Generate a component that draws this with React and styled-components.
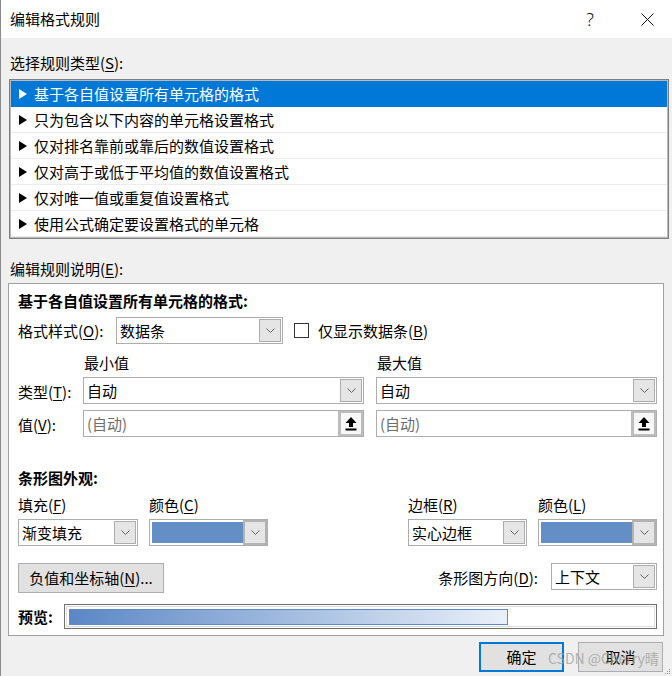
import React from 'react';
import styled, { createGlobalStyle } from 'styled-components';

const GlobalStyle = createGlobalStyle`
  html, body { margin: 0; padding: 0; background: #f0f0f0; }
  body {
    font-family: "Noto Sans CJK SC", "Noto Sans", sans-serif;
    font-size: 15px;
    color: #000;
  }
  * { box-sizing: border-box; }
  u { text-underline-offset: 2px; text-decoration-thickness: 1px; }
`;

const Window = styled.div`
  position: relative;
  width: 672px;
  height: 676px;
  background: #f0f0f0;
  border-left: 1px solid #8a8a8a;
  display: flex;
  flex-direction: column;
  overflow: hidden;
`;

const TitleBar = styled.div`
  height: 38px;
  flex: none;
  background: #fff;
  display: flex;
  align-items: center;
  padding-left: 9px;
  padding-right: 13px;
`;

const TitleText = styled.div`
  flex: 1;
  line-height: 22px;
`;

const CaptionButton = styled.div`
  width: 24px;
  height: 24px;
  display: flex;
  align-items: center;
  justify-content: center;
  font-family: "Noto Sans", sans-serif;
  font-size: 18px;
  font-weight: 300;
  color: #111;
  margin-left: ${(p) => p.$ml || 0}px;
`;

const Body = styled.div`
  flex: 1;
  display: flex;
  flex-direction: column;
  padding-left: 7px;
`;

const SectionLabel = styled.div`
  line-height: 22px;
  padding-left: 2px;
  margin-top: ${(p) => p.$mt}px;
`;

const ListBox = styled.div`
  margin-top: 5px;
  margin-left: 1px;
  width: 660px;
  border: 1px solid #7f7f7f;
  box-shadow: inset 0 0 0 1px #b9b9b9;
  padding: 1px;
  background: #fff;
`;

const ListRow = styled.div`
  height: 26px;
  display: flex;
  align-items: center;
  gap: 7px;
  padding-left: 8px;
  border-bottom: 1px solid ${(p) => (p.$selected ? '#0078d7' : '#ececec')};
  background: ${(p) => (p.$selected ? '#0078d7' : '#fff')};
  color: ${(p) => (p.$selected ? '#fff' : '#000')};
  line-height: 22px;
`;

const Triangle = styled.span`
  width: 0;
  height: 0;
  border-top: 5px solid transparent;
  border-bottom: 5px solid transparent;
  border-left: 8px solid ${(p) => (p.$light ? '#fff' : '#000')};
`;

const Panel = styled.div`
  margin-top: 3px;
  width: 656px;
  background: #fff;
  border: 1px solid #a0a0a0;
  padding: 6px 6px 6px 9px;
  display: flex;
  flex-direction: column;
`;

const Heading = styled.div`
  font-weight: 700;
  line-height: 22px;
  white-space: nowrap;
  flex: none;
  width: ${(p) => (p.$w ? `${p.$w}px` : 'auto')};
  margin-top: ${(p) => p.$mt || 0}px;
`;

const Row = styled.div`
  display: flex;
  align-items: ${(p) => p.$align || 'center'};
  margin-top: ${(p) => p.$mt || 0}px;
  gap: ${(p) => p.$gap || 0}px;
`;

const Label = styled.div`
  line-height: 22px;
  white-space: nowrap;
  width: ${(p) => (p.$w ? `${p.$w}px` : 'auto')};
  flex: none;
  padding-top: ${(p) => p.$pt || 0}px;
  margin-left: ${(p) => p.$ml || 0}px;
`;

const SelectBox = styled.div`
  width: ${(p) => p.$w}px;
  height: 27px;
  flex: none;
  border: 1px solid #adadad;
  background: #fff;
  display: flex;
  align-items: stretch;
  margin-left: ${(p) => p.$ml || 0}px;
`;

const SelectValue = styled.div`
  flex: 1;
  padding-left: 3px;
  display: flex;
  align-items: center;
  line-height: 22px;
  color: ${(p) => (p.$muted ? '#6d6d6d' : '#000')};
`;

const DropButton = styled.div`
  width: 22px;
  margin: 1px 1px 1px 0;
  border: 1px solid #adadad;
  background: #e5e5e5;
  display: flex;
  align-items: center;
  justify-content: center;
`;

const StrongDrop = styled.div`
  width: 24px;
  border: 2px solid #b3b3b3;
  background: #e5e5e5;
  display: flex;
  align-items: center;
  justify-content: center;
`;

const Swatch = styled.div`
  flex: 1;
  background: #638ec6;
  margin: 2px 0 2px 2px;
`;

const PickButton = styled.div`
  width: 25px;
  border: 2px solid #bdbdbd;
  border-left-width: 3px;
  background: #f7f7f7;
  display: flex;
  align-items: center;
  justify-content: center;
`;

const CheckBox = styled.div`
  width: 15px;
  height: 15px;
  flex: none;
  border: 1px solid #333;
  background: #fff;
  margin-left: 11px;
  margin-right: 9px;
`;

const Column = styled.div`
  display: flex;
  flex-direction: column;
  gap: 3px;
`;

const Spacer = styled.div`
  flex: 1;
`;

const PushButton = styled.div`
  width: ${(p) => p.$w}px;
  height: 30px;
  flex: none;
  display: flex;
  align-items: center;
  justify-content: center;
  background: #e1e1e1;
  border: ${(p) => (p.$default ? '2px solid #0078d7' : '1px solid #adadad')};
  line-height: 22px;
  white-space: nowrap;
  margin-left: ${(p) => p.$ml || 0}px;
`;

const PreviewBox = styled.div`
  width: 593px;
  height: 25px;
  flex: none;
  border: 1px solid #707070;
  padding: 1px;
  background: #fff;
`;

const PreviewInner = styled.div`
  height: 100%;
  border: 1px solid #dcdcdc;
  padding: 2px;
`;

const Bar = styled.div`
  height: 16px;
  border: 1px solid #5f88c4;
  background: linear-gradient(to right, #5b87c5, #eaf0f9);
`;

const Footer = styled.div`
  display: flex;
  justify-content: flex-end;
  margin-top: 6px;
  padding-right: 9px;
`;

const Watermark = styled.div`
  position: absolute;
  left: 547px;
  top: 648px;
  line-height: 20px;
  font-size: 14px;
  color: rgba(160, 160, 160, 0.8);
  pointer-events: none;
  white-space: nowrap;
`;

const Grip = styled.svg`
  position: absolute;
  right: 1px;
  bottom: 1px;
`;

const Chevron = () => (
  <svg width="9" height="5" viewBox="0 0 9 5">
    <path d="M0.5 0.5 L4.5 4.5 L8.5 0.5" stroke="#606060" strokeWidth="1" fill="none" />
  </svg>
);

const UploadIcon = () => (
  <svg width="12" height="15" viewBox="0 0 12 15">
    <path d="M6 1 L11.5 7 H8 V11 H4 V7 H0.5 Z" fill="#000" />
    <rect x="0.5" y="12.5" width="11" height="2" fill="#000" />
  </svg>
);

const CloseIcon = () => (
  <svg width="13" height="13" viewBox="0 0 13 13">
    <path d="M0.5 0.5 L12.5 12.5 M12.5 0.5 L0.5 12.5" stroke="#111" strokeWidth="1" />
  </svg>
);

const rules = [
  '基于各自值设置所有单元格的格式',
  '只为包含以下内容的单元格设置格式',
  '仅对排名靠前或靠后的数值设置格式',
  '仅对高于或低于平均值的数值设置格式',
  '仅对唯一值或重复值设置格式',
  '使用公式确定要设置格式的单元格',
];

const Select = ({ w, value, muted, ml }) => (
  <SelectBox $w={w} $ml={ml}>
    <SelectValue $muted={muted}>{value}</SelectValue>
    <DropButton>
      <Chevron />
    </DropButton>
  </SelectBox>
);

const ColorSelect = ({ w }) => (
  <SelectBox $w={w}>
    <Swatch />
    <StrongDrop>
      <Chevron />
    </StrongDrop>
  </SelectBox>
);

const ValueInput = ({ w, ml }) => (
  <SelectBox $w={w} $ml={ml}>
    <SelectValue $muted>(自动)</SelectValue>
    <PickButton>
      <UploadIcon />
    </PickButton>
  </SelectBox>
);

export default function App() {
  return (
    <>
      <GlobalStyle />
      <Window>
        <TitleBar>
          <TitleText>编辑格式规则</TitleText>
          <CaptionButton>?</CaptionButton>
          <CaptionButton $ml={33}>
            <CloseIcon />
          </CaptionButton>
        </TitleBar>
        <Body>
          <SectionLabel $mt={14}>
            选择规则类型(<u>S</u>):
          </SectionLabel>
          <ListBox>
            {rules.map((r, i) => (
              <ListRow key={r} $selected={i === 0}>
                <Triangle $light={i === 0} />
                <span>{r}</span>
              </ListRow>
            ))}
          </ListBox>
          <SectionLabel $mt={19}>
            编辑规则说明(<u>E</u>):
          </SectionLabel>
          <Panel>
            <Heading>基于各自值设置所有单元格的格式:</Heading>
            <Row $mt={5}>
              <Label $w={98}>
                格式样式(<u>O</u>):
              </Label>
              <Select w={167} value="数据条" />
              <CheckBox />
              <Label>
                仅显示数据条(<u>B</u>)
              </Label>
            </Row>
            <Row $mt={8}>
              <Label $w={65} />
              <Label $w={293} $ml={1}>
                最小值
              </Label>
              <Label>最大值</Label>
            </Row>
            <Row $mt={3}>
              <Label $w={65} $pt={3}>
                类型(<u>T</u>):
              </Label>
              <Select w={281} value="自动" />
              <Select w={281} value="自动" ml={12} />
            </Row>
            <Row $mt={6}>
              <Label $w={65} $pt={3}>
                值(<u>V</u>):
              </Label>
              <ValueInput w={281} />
              <ValueInput w={281} ml={12} />
            </Row>
            <Heading $mt={30}>条形图外观:</Heading>
            <Row $mt={5} $align="flex-start">
              <Row $gap={11} $align="flex-start">
                <Column>
                  <Label>
                    填充(<u>F</u>)
                  </Label>
                  <Select w={120} value="渐变填充" />
                </Column>
                <Column>
                  <Label>
                    颜色(<u>C</u>)
                  </Label>
                  <ColorSelect w={119} />
                </Column>
              </Row>
              <Spacer />
              <Row $gap={11} $align="flex-start">
                <Column>
                  <Label>
                    边框(<u>R</u>)
                  </Label>
                  <Select w={119} value="实心边框" />
                </Column>
                <Column>
                  <Label>
                    颜色(<u>L</u>)
                  </Label>
                  <ColorSelect w={119} />
                </Column>
              </Row>
            </Row>
            <Row $mt={17} $align="flex-start">
              <PushButton $w={146}>
                负值和坐标轴(<u>N</u>)...
              </PushButton>
              <Spacer />
              <Label $pt={4}>
                条形图方向(<u>D</u>):
              </Label>
              <Select w={106} value="上下文" ml={13} />
            </Row>
            <Row $mt={11}>
              <Heading $w={46}>预览:</Heading>
              <PreviewBox>
                <PreviewInner>
                  <Bar style={{ width: `${(439 / 583) * 100}%` }} />
                </PreviewInner>
              </PreviewBox>
            </Row>
          </Panel>
          <Footer>
            <PushButton $w={85} $default>
              确定
            </PushButton>
            <PushButton $w={85} $ml={14}>
              取消
            </PushButton>
          </Footer>
        </Body>
        <Watermark>CSDN @Cherry晴</Watermark>
        <Grip width="6" height="6" viewBox="0 0 6 6">
          <rect x="4" y="0" width="1" height="1" fill="#999" />
          <rect x="2" y="2" width="1" height="1" fill="#999" />
          <rect x="4" y="2" width="1" height="1" fill="#999" />
          <rect x="0" y="4" width="1" height="1" fill="#999" />
          <rect x="2" y="4" width="1" height="1" fill="#999" />
          <rect x="4" y="4" width="1" height="1" fill="#999" />
        </Grip>
      </Window>
    </>
  );
}
